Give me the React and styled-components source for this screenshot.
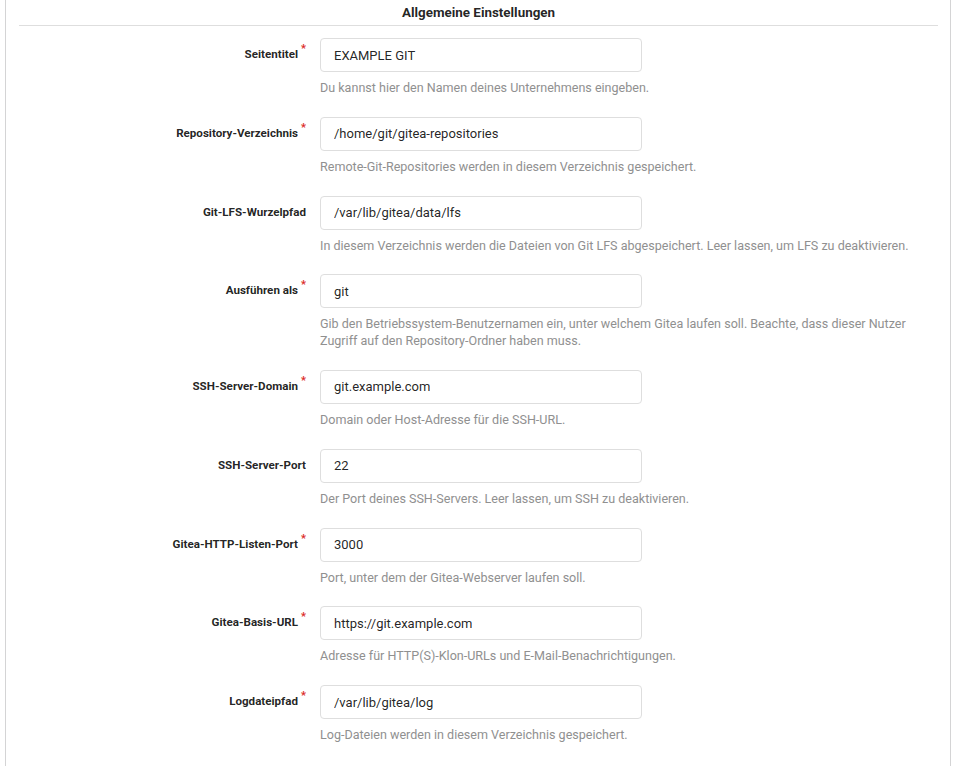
import React from 'react'
import styled, { createGlobalStyle } from 'styled-components'

const GlobalStyle = createGlobalStyle`
  body {
    margin: 0;
    background: #fff;
    font-family: Roboto, "Liberation Sans", sans-serif;
    color: rgba(0, 0, 0, 0.87);
  }
`

const fields = [
  { label: 'Seitentitel', required: true, value: 'EXAMPLE GIT', help: 'Du kannst hier den Namen deines Unternehmens eingeben.' },
  { label: 'Repository-Verzeichnis', required: true, value: '/home/git/gitea-repositories', help: 'Remote-Git-Repositories werden in diesem Verzeichnis gespeichert.' },
  { label: 'Git-LFS-Wurzelpfad', value: '/var/lib/gitea/data/lfs', help: 'In diesem Verzeichnis werden die Dateien von Git LFS abgespeichert. Leer lassen, um LFS zu deaktivieren.' },
  { label: 'Ausführen als', required: true, value: 'git', help: 'Gib den Betriebssystem-Benutzernamen ein, unter welchem Gitea laufen soll. Beachte, dass dieser Nutzer Zugriff auf den Repository-Ordner haben muss.' },
  { label: 'SSH-Server-Domain', required: true, value: 'git.example.com', help: 'Domain oder Host-Adresse für die SSH-URL.' },
  { label: 'SSH-Server-Port', value: '22', help: 'Der Port deines SSH-Servers. Leer lassen, um SSH zu deaktivieren.' },
  { label: 'Gitea-HTTP-Listen-Port', required: true, value: '3000', help: 'Port, unter dem der Gitea-Webserver laufen soll.' },
  { label: 'Gitea-Basis-URL', required: true, value: 'https://git.example.com', help: 'Adresse für HTTP(S)-Klon-URLs und E-Mail-Benachrichtigungen.' },
  { label: 'Logdateipfad', required: true, value: '/var/lib/gitea/log', help: 'Log-Dateien werden in diesem Verzeichnis gespeichert.' },
]

const App = () => {
  return (
    <>
      <GlobalStyle />
      <Segment>
        <Header>Allgemeine Einstellungen</Header>
        <Form>
          {fields.map((f) => (
            <Field key={f.label}>
              <Label required={f.required}>{f.label}</Label>
              <Control>
                <Input defaultValue={f.value} />
                <Help>{f.help}</Help>
              </Control>
            </Field>
          ))}
        </Form>
      </Segment>
    </>
  )
}

export default App

const Segment = styled.div`
  margin: 0 5px;
  min-height: 766px;
  box-sizing: border-box;
  border-left: 1px solid #d4d4d5;
  border-right: 1px solid #d4d4d5;
  padding: 0 12px 0 13px;
`

const Header = styled.h4`
  margin: 0;
  padding: 5px 0 4px;
  text-align: center;
  font-size: 13.4px;
  font-weight: 700;
  line-height: 16px;
  border-bottom: 1px solid #dedede;
`

const Form = styled.div`
  display: flex;
  flex-direction: column;
  gap: 20px;
  padding-top: 12px;
`

const Field = styled.div`
  display: grid;
  grid-template-columns: 287px 1fr;
  column-gap: 14px;
  align-items: start;
`

const Label = styled.label`
  justify-self: end;
  padding-top: 8px;
  font-size: 11.6px;
  font-weight: 700;
  line-height: 16px;
  position: relative;
  padding-right: ${(p) => (p.required ? '8px' : '0')};

  &::after {
    content: ${(p) => (p.required ? "'*'" : 'none')};
    position: absolute;
    right: 0;
    top: 3px;
    color: #db2828;
    font-size: 11px;
    font-weight: 700;
  }
`

const Control = styled.div`
  display: flex;
  flex-direction: column;
`

const Input = styled.input`
  width: 322px;
  height: 34px;
  box-sizing: border-box;
  border: 1px solid #dedede;
  border-radius: 4px;
  padding: 0 13px;
  font-family: Roboto, "Liberation Sans", sans-serif;
  font-size: 13px;
  color: rgba(0, 0, 0, 0.87);
  outline: none;
`

const Help = styled.div`
  margin-top: 8px;
  max-width: 600px;
  font-size: 12.55px;
  line-height: 16.8px;
  color: #909090;
`
